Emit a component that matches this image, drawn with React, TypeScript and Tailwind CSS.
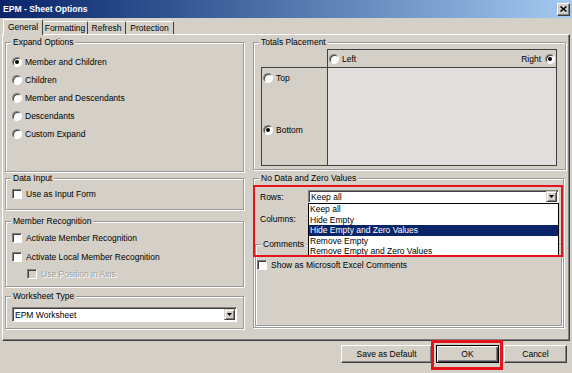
import type { ReactNode } from 'react'

function Radio({ checked }: { checked?: boolean }) {
  return (
    <span className="inline-flex h-[10px] w-[10px] shrink-0 items-center justify-center rounded-full border border-t-[#808080] border-l-[#808080] border-r-white border-b-white bg-white shadow-[inset_1px_1px_0_#404040]">
      {checked && <span className="h-[4px] w-[4px] rounded-full bg-black" />}
    </span>
  )
}

function Check({ disabled }: { disabled?: boolean }) {
  return (
    <span
      className={`inline-block h-[10px] w-[10px] shrink-0 border border-t-[#808080] border-l-[#808080] border-r-white border-b-white shadow-[inset_1px_1px_0_#404040] ${
        disabled ? 'bg-[#d4d0c8]' : 'bg-white'
      }`}
    />
  )
}

function Group({ label, className, children }: { label: string; className?: string; children?: ReactNode }) {
  return (
    <fieldset className={`border border-[#9a9a9a] shadow-[1px_1px_0_#fff,inset_1px_1px_0_#fff] ${className ?? ''}`}>
      <legend className="ml-[5px] bg-[#d4d0c8] px-[2px] leading-[10px]">{label}</legend>
      {children}
    </fieldset>
  )
}

function Arrow() {
  return (
    <span className="flex h-[11px] w-[11px] items-center justify-center border border-t-[#d4d0c8] border-l-[#d4d0c8] border-r-[#404040] border-b-[#404040] bg-[#d4d0c8] shadow-[inset_1px_1px_0_#fff,inset_-1px_-1px_0_#808080]">
      <svg width="5" height="3" viewBox="0 0 5 3">
        <path d="M0 0h5L2.5 3z" fill="#000" />
      </svg>
    </span>
  )
}

function Combo({ value, className }: { value?: string; className?: string }) {
  return (
    <div
      className={`flex items-center justify-between border border-t-[#808080] border-l-[#808080] border-r-white border-b-white bg-white pl-[2px] pr-[1px] shadow-[inset_1px_1px_0_#404040] ${className ?? ''}`}
    >
      <span>{value}</span>
      <Arrow />
    </div>
  )
}

function Button({ label, width, isDefault }: { label: string; width: string; isDefault?: boolean }) {
  return (
    <button
      className={`flex h-[18px] items-center justify-center bg-[#d4d0c8] ${width} ${
        isDefault
          ? 'border border-black shadow-[inset_1px_1px_0_#fff,inset_-1px_-1px_0_#404040,inset_-2px_-2px_0_#808080]'
          : 'border border-t-white border-l-white border-r-[#404040] border-b-[#404040] shadow-[inset_-1px_-1px_0_#808080]'
      }`}
    >
      {label}
    </button>
  )
}

const TABS = [
  { label: 'Formatting', w: 'w-[45px]' },
  { label: 'Refresh', w: 'w-[38px]' },
  { label: 'Protection', w: 'w-[48px]' },
]

const LIST = ['Keep all', 'Hide Empty', 'Hide Empty and Zero Values', 'Remove Empty', 'Remove Empty and Zero Values']

export default function App() {
  return (
    <div className="flex h-[373px] w-[572px] flex-col overflow-hidden bg-[#d4d0c8] font-['Liberation_Sans',Arial,sans-serif] text-[8.5px] leading-[10px] text-black">
      {/* Title bar */}
      <div className="flex h-[18px] items-center justify-between bg-linear-to-r from-[#0a246a] to-[#a6caf0] pl-[3px] pr-[2px]">
        <span className="text-[8.6px] font-bold text-white">EPM - Sheet Options</span>
        <span className="flex h-[13px] w-[13px] items-center justify-center border border-t-white border-l-white border-r-[#404040] border-b-[#404040] bg-[#d4d0c8] shadow-[inset_-1px_-1px_0_#808080]">
          <svg width="7" height="6" viewBox="0 0 7 6">
            <path d="M0.5 0.5l6 5M6.5 0.5l-6 5" stroke="#000" strokeWidth="1.5" />
          </svg>
        </span>
      </div>

      {/* Tabs */}
      <div className="mt-[1px] flex h-[15px] items-end pl-[3px]">
        <div className="relative z-10 -mb-px flex h-[16px] w-[40px] items-center justify-center rounded-t-[2px] border-l border-t border-r border-l-white border-t-white border-r-[#404040] bg-[#d4d0c8] pb-[2px]">
          General
        </div>
        {TABS.map((t) => (
          <div
            key={t.label}
            className={`flex h-[13px] items-center justify-center rounded-t-[2px] border-t border-r border-t-white border-r-[#404040] ${t.w}`}
          >
            {t.label}
          </div>
        ))}
      </div>

      {/* Tab panel */}
      <div className="mx-[2px] flex h-[307px] border border-t-white border-l-white border-r-[#404040] border-b-[#404040] pl-[2px] pt-[2px] shadow-[inset_-1px_-1px_0_#808080]">
        {/* Left column */}
        <div className="flex w-[239px] flex-col">
          <Group label="Expand Options" className="h-[135px]">
            <div className="flex flex-col pl-[6px] pt-[6px]">
              {['Member and Children', 'Children', 'Member and Descendants', 'Descendants', 'Custom Expand'].map((l, i) => (
                <div key={l} className="flex h-[18px] items-center gap-[3px]">
                  <Radio checked={i === 0} />
                  <span>{l}</span>
                </div>
              ))}
            </div>
          </Group>

          <Group label="Data Input" className="mt-[1px] h-[37px]">
            <div className="box-content flex h-[14px] items-center gap-[4px] pl-[6px] pt-[4px]">
              <Check />
              <span>Use as Input Form</span>
            </div>
          </Group>

          <Group label="Member Recognition" className="mt-[6px] h-[71px]">
            <div className="flex flex-col pl-[6px] pt-[6px]">
              <div className="flex h-[12px] items-center gap-[4px]">
                <Check />
                <span>Activate Member Recognition</span>
              </div>
              <div className="mt-[7px] flex h-[12px] items-center gap-[4px]">
                <Check />
                <span>Activate Local Member Recognition</span>
              </div>
              <div className="mt-[5px] flex h-[12px] items-center gap-[4px] pl-[15px]">
                <Check disabled />
                <span className="text-[#a0a0a0] [text-shadow:1px_1px_0_#fff]">Use Position in Axis</span>
              </div>
            </div>
          </Group>

          <Group label="Worksheet Type" className="mt-[4px] h-[38px]">
            <div className="px-[6px] pt-[6px]">
              <Combo value="EPM Worksheet" className="h-[15px]" />
            </div>
          </Group>
        </div>

        {/* Right column */}
        <div className="relative ml-[9px] flex w-[313px] flex-col">
          <Group label="Totals Placement" className="h-[133px]">
            <div className="grid grid-cols-[66px_230px] grid-rows-[18px_99px] pl-[7px] pt-[2px]">
              <div />
              <div className="flex items-center justify-between border-l border-t border-r border-[#404040] pl-[1px] pr-[1px]">
                <span className="flex items-center gap-[3px]">
                  <Radio />
                  Left
                </span>
                <span className="flex items-center gap-[4px]">
                  Right
                  <Radio checked />
                </span>
              </div>
              <div className="flex flex-col border-l border-t border-b border-[#404040] pl-[1px]">
                <div className="mt-[4px] flex h-[12px] items-center gap-[3px]">
                  <Radio />
                  Top
                </div>
                <div className="mt-[40px] flex h-[12px] items-center gap-[3px]">
                  <Radio checked />
                  Bottom
                </div>
              </div>
              <div className="border border-[#404040] bg-[#e0dfdd]" />
            </div>
          </Group>

          <Group label="No Data and Zero Values" className="mt-[3px] h-[155px] w-[311px]">
            <div className="flex flex-col pl-[6px] pr-[4px] pt-[7px]">
              <div className="flex items-center">
                <span className="w-[48px]">Rows:</span>
                <Combo value="Keep all" className="h-[13px] w-[251px]" />
              </div>
              <div className="mt-[9px] flex items-center">
                <span className="w-[48px]">Columns:</span>
                <Combo className="h-[13px] w-[251px]" />
              </div>
            </div>
            <Group label="Comments" className="mx-[1px] mt-[14px] h-[87px]">
              <div className="box-content flex h-[12px] items-center gap-[4px] pl-[1px] pt-[10px]">
                <Check />
                <span>Show as Microsoft Excel Comments</span>
              </div>
            </Group>
          </Group>

          {/* Open dropdown list */}
          <div className="absolute left-[55px] top-[166px] h-[54px] w-[251px] overflow-hidden border border-black bg-white">
            {LIST.map((item, i) => (
              <div
                key={item}
                className={`flex h-[10.5px] items-center px-[1px] ${i === 2 ? 'bg-[#0a246a] text-white' : ''}`}
              >
                {item}
              </div>
            ))}
          </div>

          {/* Red highlight */}
          <div className="pointer-events-none absolute left-0 top-[148px] h-[72px] w-[310px] border-2 border-[#e3141c]" />
        </div>
      </div>

      {/* Buttons */}
      <div className="mt-[4px] flex justify-end pr-[5px]">
        <Button label="Save as Default" width="w-[91px]" />
        <span className="relative ml-[4px]">
          <Button label="OK" width="w-[63px]" isDefault />
          <span className="pointer-events-none absolute -bottom-[7px] -left-[5px] -right-[4px] -top-[5px] border-[3px] border-[#e3141c]" />
        </span>
        <span className="ml-[5px]">
          <Button label="Cancel" width="w-[63px]" />
        </span>
      </div>
    </div>
  )
}
